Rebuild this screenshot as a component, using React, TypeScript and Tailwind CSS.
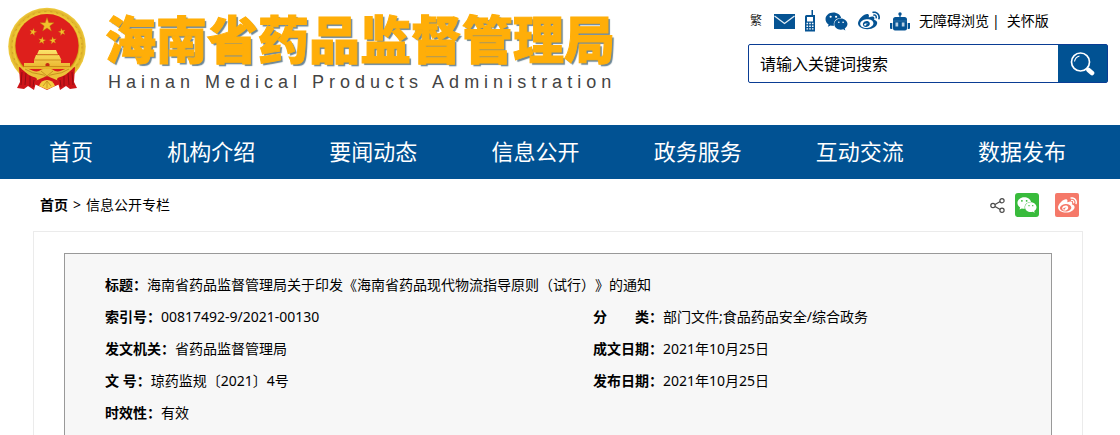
import React from "react";
import { FaWeibo, FaWeixin } from "react-icons/fa";

const NAV = ["首页", "机构介绍", "要闻动态", "信息公开", "政务服务", "互动交流", "数据发布"];

const STAR = "M0,-10 L2.4,-3.2 L9.5,-3.1 L3.8,1.2 L5.9,8.1 L0,4 L-5.9,8.1 L-3.8,1.2 L-9.5,-3.1 L-2.4,-3.2 Z";

function Emblem() {
  return (
    <svg viewBox="0 0 80 84" className="h-[84px] w-20 shrink-0" aria-hidden="true">
      <defs>
        <radialGradient id="gold" cx="50%" cy="50%" r="50%">
          <stop offset="0.8" stopColor="#c9900f" />
          <stop offset="0.85" stopColor="#f0cb38" />
          <stop offset="0.93" stopColor="#e0b42a" />
          <stop offset="1" stopColor="#f1cf44" />
        </radialGradient>
        <linearGradient id="roof" x1="0" y1="0" x2="0" y2="1">
          <stop offset="0" stopColor="#fbe36a" />
          <stop offset="1" stopColor="#e9b229" />
        </linearGradient>
      </defs>
      <circle cx="40" cy="39.500" r="38.800" fill="url(#gold)" />
      <circle cx="40" cy="39.500" r="35" fill="none" stroke="#cf9d25" strokeWidth="1" strokeDasharray="2 4" />
      <circle cx="40" cy="38.500" r="31.500" fill="#de1f1c" />
      <g fill="#f2c02c" stroke="#b9770c" strokeWidth="0.6">
        <path d={STAR} transform="translate(40 18) scale(.74)" />
        <path d={STAR} transform="translate(26 25) rotate(15) scale(.38)" />
        <path d={STAR} transform="translate(55 25) rotate(-15) scale(.38)" />
        <path d={STAR} transform="translate(35 33.500) rotate(10) scale(.38)" />
        <path d={STAR} transform="translate(46 33.500) rotate(-10) scale(.38)" />
      </g>
      <path d="M32 43h17l2 4.500H30zM29 48h23l2.500 5H27zM27 53h27v3h9v6H17v-6h10z" fill="url(#roof)" />
      <path d="M30 47.800h21M27 53h27M17 59.500h46" stroke="#bf7a10" strokeWidth="0.7" />
      <path d="M38.500 59v-2q2-2 4 0v2z" fill="#c62a14" />
      <path d="M12 60 C20 62 25 66 30 72 L27 83 L21 79 L17 82 L10 81 L13 75Z M68 60 C60 62 55 66 50 72 L53 83 L59 79 L63 82 L70 81 L67 75Z" fill="#cd1419" />
      <path d="M15 65 l-1 13 M19 66 l-1 12 M23 69 v10 M27 73 l-1 7 M65 65 l1 13 M61 66 l1 12 M57 69 v10 M53 73 l1 7" stroke="#950d12" strokeWidth="1" />
      <path d="M13 60 C22 60 26 66 32 64 Q36 61 40 62 Q44 61 48 64 C54 66 58 60 67 60 C62 66 56 70 49 71 L40 75 L31 71 C24 70 18 66 13 60Z" fill="#ecc239" />
      <path d="M18 62q8 5 14 5q5 0 8 4q3-4 8-4q6 0 14-5M34 64l6 5 6-5" fill="none" stroke="#c08718" strokeWidth="0.8" />
      <path d="M28 74 L40 69 L52 74 L53 77 L46 80 L40 83 L34 80 L27 77Z" fill="#d3161a" />
      <path d="M32 79 Q34 73 40 73 Q46 73 48 79 L40 82.500Z" fill="#f3cc3e" />
      <path d="M36 79l4-5 4 5M40 74v7" fill="none" stroke="#bd8219" strokeWidth="0.7" />
    </svg>
  );
}

function MailIcon() {
  return (
    <svg viewBox="0 0 21 15" className="h-[15px] w-[21px]" aria-hidden="true">
      <path d="M0 0h21v15H0z" fill="#055393" />
      <path d="m.5 2 10 7.500L20.500 2" fill="none" stroke="#e3edf5" strokeWidth="1.300" />
    </svg>
  );
}

function PhoneIcon() {
  return (
    <svg viewBox="0 0 10 22" className="h-[22px] w-[10px]" aria-hidden="true">
      <path d="M6.500 0H8v5h2v16.500H0V6.500Q0 5 1.500 5h5z" fill="#055393" />
      <path d="M2 7h6v4.500H2z" fill="#fff" />
      <path d="M1.500 13.500h7M1.500 16.200h7M1.500 18.900h7" stroke="#fff" strokeWidth="1.400" strokeDasharray="1.600 1.100" />
    </svg>
  );
}

function RobotIcon() {
  return (
    <svg viewBox="0 0 20 19" className="h-[19px] w-5" aria-hidden="true">
      <g fill="#055393">
        <circle cx="10" cy="2" r="1.700" />
        <path d="M9.400 2h1.200v4H9.400zM5.500 5h9q2.500 0 2.500 2.500V10H3V7.500Q3 5 5.500 5zM0 11h2.300v6H1q-1 0-1-1zM17.700 11H20v5q0 1-1 1h-1.300zM3 10h14v6.500q0 2-2 2H5q-2 0-2-2z" />
      </g>
      <path d="M5.500 10.500h2.700v4H5.500zM11.800 10.500h2.700v4h-2.700z" fill="#b9d0e3" />
      <path d="M3 9h14" stroke="#4d87b4" strokeWidth="0.600" />
    </svg>
  );
}

function SearchIcon() {
  return (
    <svg viewBox="0 0 25 24" className="h-6 w-[25px]" aria-hidden="true">
      <circle cx="10.500" cy="10" r="9" fill="none" stroke="#fff" strokeWidth="1.700" />
      <path d="M4.500 9.500q.8-4.500 5-5.500" fill="none" stroke="#fff" strokeWidth="1.100" />
      <path d="m16.500 16 1.600 1.500" stroke="#fff" strokeWidth="2" />
      <path d="m18.500 18 3.500 3" stroke="#fff" strokeWidth="4.600" strokeLinecap="round" />
    </svg>
  );
}

function ShareIcon() {
  return (
    <svg viewBox="0 0 15 15" className="h-[15px] w-[15px]" fill="none" stroke="#4a4a4a" strokeWidth="1.200" aria-hidden="true">
      <path d="m5 6.500 5.200-3M5 8.500l5.200 3" />
      <circle cx="3" cy="7.500" r="2.200" />
      <circle cx="12" cy="2.700" r="2.100" />
      <circle cx="12" cy="12.300" r="2.100" />
    </svg>
  );
}

function Field({ label, value, wide }: { label: string; value: string; wide?: boolean }) {
  return (
    <div className={wide ? "col-span-2 flex" : "flex"}>
      <dt className="shrink-0 font-bold whitespace-pre">{label}</dt>
      <dd>{value}</dd>
    </div>
  );
}

export default function App() {
  return (
    <div className="flex min-h-screen flex-col bg-white font-['Noto_Sans','Noto_Sans_CJK_SC',sans-serif] text-sm text-black [text-spacing-trim:space-all]">
      <header className="flex h-[125px] items-start justify-between pr-3 pl-[7px]">
        <a href="#home" className="flex items-start gap-[18px] pt-[7px]">
          <Emblem />
          <span className="flex flex-col">
            <span className="font-['Noto_Sans_CJK_SC',sans-serif] text-[51px] leading-[60px] font-black whitespace-nowrap text-[#ffae08] [-webkit-text-stroke:1px_#ffae08] [text-shadow:2px_2px_1px_#6d8796]">
              海南省药品监督管理局
            </span>
            <span className="pt-1 pl-[3px] font-['Liberation_Sans',sans-serif] text-lg leading-[22px] tracking-[5px] whitespace-nowrap text-[#444]">
              Hainan Medical Products Administration
            </span>
          </span>
        </a>
        <div className="flex w-[360px] flex-col pt-[10px]">
          <div className="flex h-[22px] items-center pl-[2px] text-[#055393]">
            <a href="#traditional" className="mr-3 text-xs text-[#222]">繁</a>
            <a href="#mail" aria-label="邮箱" className="mr-[10px]"><MailIcon /></a>
            <a href="#mobile" aria-label="手机" className="mr-[10px]"><PhoneIcon /></a>
            <a href="#wechat" aria-label="微信" className="mr-[10px]"><FaWeixin className="size-[23px]" /></a>
            <a href="#weibo" aria-label="微博" className="mr-[10px]"><FaWeibo className="size-[22px]" /></a>
            <a href="#robot" aria-label="智能机器人" className="mr-[9px]"><RobotIcon /></a>
            <a href="#accessible" className="whitespace-nowrap text-black">无障碍浏览</a>
            <span className="mx-[3px] text-black">|</span>
            <a href="#care" className="ml-1 whitespace-nowrap text-black">关怀版</a>
          </div>
          <form className="mt-3 flex h-[39px] rounded-[2px] border border-[#0a3d94]" onSubmit={(e) => e.preventDefault()}>
            <input
              type="text"
              aria-label="搜索"
              placeholder="请输入关键词搜索"
              className="min-w-0 flex-1 px-[11px] text-base outline-none placeholder:text-black"
            />
            <button type="submit" aria-label="搜索" className="flex w-[49px] items-center justify-center bg-[#015293]">
              <SearchIcon />
            </button>
          </form>
        </div>
      </header>

      <nav className="flex h-[54px] items-center justify-between bg-[#015293] pr-[54px] pl-[49px]">
        {NAV.map((item) => (
          <a key={item} href="#nav" className="text-[22px] whitespace-nowrap text-white">
            {item}
          </a>
        ))}
      </nav>

      <div className="flex h-[52px] items-center justify-between pr-[41px] pl-10">
        <div className="flex items-center gap-[5px]">
          <a href="#home" className="font-bold">首页</a>
          <span>&gt;</span>
          <a href="#column">信息公开专栏</a>
        </div>
        <div className="flex items-center">
          <span className="mr-[10px]"><ShareIcon /></span>
          <a href="#share-wechat" aria-label="分享到微信" className="mr-4 flex size-6 items-center justify-center rounded-[3px] bg-[#39bb3c] text-white">
            <FaWeixin className="size-5" />
          </a>
          <a href="#share-weibo" aria-label="分享到微博" className="flex size-6 items-center justify-center rounded-[2px] bg-[#f57969] text-white">
            <FaWeibo className="size-[19px]" />
          </a>
        </div>
      </div>

      <main className="mr-[37px] ml-[33px] flex flex-1 flex-col border border-b-0 border-[#ebebeb] px-[30px] pt-[21px]">
        <dl className="grid flex-1 grid-cols-[488fr_458fr] content-start border border-b-0 border-[#999] bg-[#f7f7f7] pt-[15px] pl-10 leading-8">
          <Field wide label="标题：" value="海南省药品监督管理局关于印发《海南省药品现代物流指导原则（试行）》的通知" />
          <Field label="索引号：" value="00817492-9/2021-00130" />
          <Field label="分　　类：" value="部门文件;食品药品安全/综合政务" />
          <Field label="发文机关：" value="省药品监督管理局" />
          <Field label="成文日期：" value="2021年10月25日" />
          <Field label="文 号：" value="琼药监规〔2021〕4号" />
          <Field label="发布日期：" value="2021年10月25日" />
          <Field wide label="时效性：" value="有效" />
        </dl>
      </main>
    </div>
  );
}
